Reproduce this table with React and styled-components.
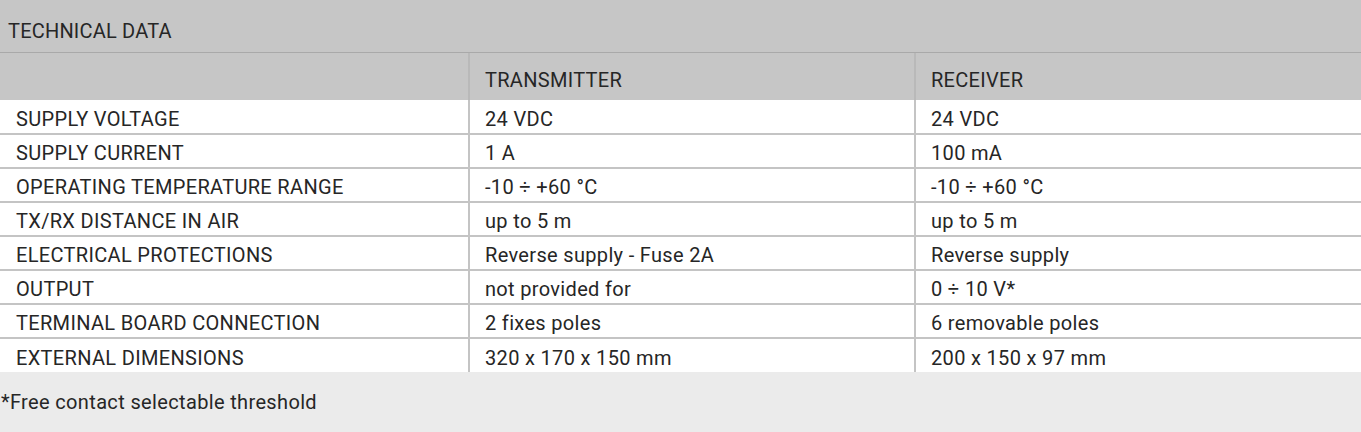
import React from "react";
import styled, { createGlobalStyle } from "styled-components";

const Global = createGlobalStyle`
  html, body { margin: 0; padding: 0; background: #ebebeb; }
  body { font-family: Roboto, "Noto Sans", "Liberation Sans", sans-serif; color: #262626; }
`;

const Wrap = styled.div`
  width: 1361px;
  display: flex;
  flex-direction: column;
`;

const Title = styled.div`
  height: 53px;
  box-sizing: border-box;
  background: #c6c6c6;
  border-bottom: 1px solid #a9a9a9;
  display: flex;
  align-items: center;
  padding: 9px 0 0 8px;
  font-size: 20px;
  letter-spacing: 0.2px;
`;

const Table = styled.table`
  width: 100%;
  border-collapse: collapse;
  table-layout: fixed;
  background: #fff;
`;

const HeadRow = styled.tr`
  background: #c6c6c6;
  height: 47px;
`;

const HeadCell = styled.th`
  font-weight: 400;
  text-align: left;
  padding: 7px ${(p) => (p.$first ? "16px" : "15px")} 0;
  font-size: 20px;
  letter-spacing: 0.3px;
  border-left: ${(p) => (p.$first ? "none" : "2px solid #b9b9b9")};
`;

const Row = styled.tr`
  height: 34px;
  border-top: ${(p) => (p.$first ? "none" : "2px solid #c4c4c4")};
`;

const Cell = styled.td`
  padding: 4px ${(p) => (p.$first ? "16px" : "15px")} 0;
  font-size: 20px;
  letter-spacing: 0.33px;
  white-space: nowrap;
  border-left: ${(p) => (p.$first ? "none" : "2px solid #c4c4c4")};
`;

const Footer = styled.div`
  height: 61px;
  box-sizing: border-box;
  background: #ebebeb;
  display: flex;
  align-items: center;
  padding: 0 0 1px 1px;
  font-size: 20px;
  letter-spacing: 0.35px;
`;

const rows = [
  ["SUPPLY VOLTAGE", "24 VDC", "24 VDC"],
  ["SUPPLY CURRENT", "1 A", "100 mA"],
  ["OPERATING TEMPERATURE RANGE", "-10 ÷ +60 °C", "-10 ÷ +60 °C"],
  ["TX/RX DISTANCE IN AIR", "up to 5 m", "up to 5 m"],
  ["ELECTRICAL PROTECTIONS", "Reverse supply - Fuse 2A", "Reverse supply"],
  ["OUTPUT", "not provided for", "0 ÷ 10 V*"],
  ["TERMINAL BOARD CONNECTION", "2 fixes poles", "6 removable poles"],
  ["EXTERNAL DIMENSIONS", "320 x 170 x 150 mm", "200 x 150 x 97 mm"],
];

export default function App() {
  return (
    <Wrap>
      <Global />
      <Title>TECHNICAL DATA</Title>
      <Table>
        <colgroup>
          <col style={{ width: 469 }} />
          <col style={{ width: 446 }} />
          <col style={{ width: 446 }} />
        </colgroup>
        <thead>
          <HeadRow>
            <HeadCell $first></HeadCell>
            <HeadCell>TRANSMITTER</HeadCell>
            <HeadCell>RECEIVER</HeadCell>
          </HeadRow>
        </thead>
        <tbody>
          {rows.map((r, i) => (
            <Row key={i} $first={i === 0}>
              <Cell $first>{r[0]}</Cell>
              <Cell>{r[1]}</Cell>
              <Cell>{r[2]}</Cell>
            </Row>
          ))}
        </tbody>
      </Table>
      <Footer>*Free contact selectable threshold</Footer>
    </Wrap>
  );
}
